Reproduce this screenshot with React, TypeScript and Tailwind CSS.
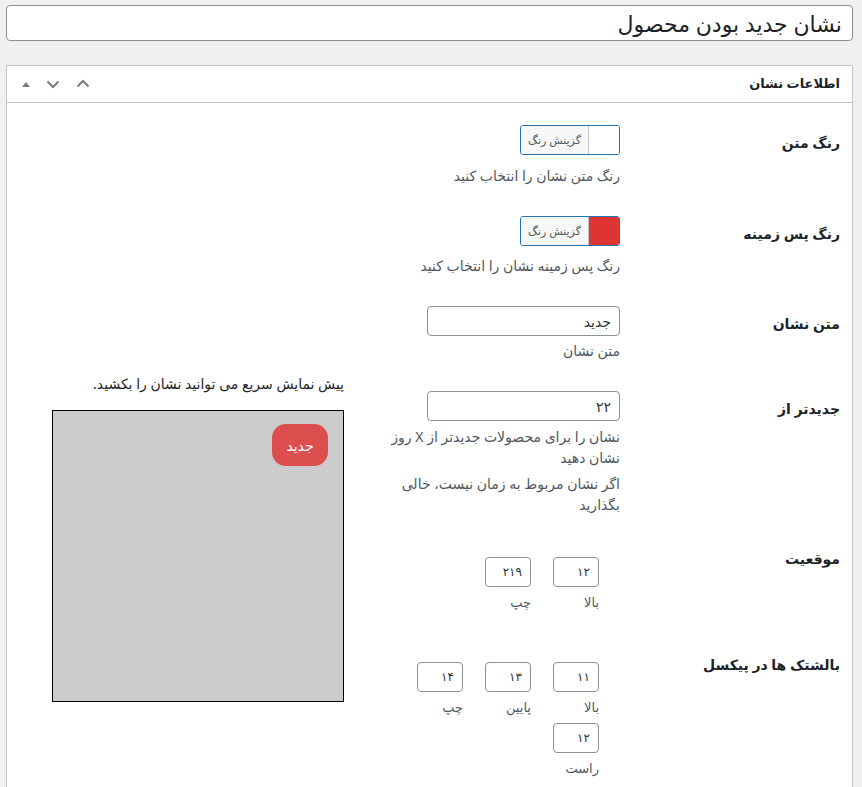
import React from 'react';

const fa = { fontFamily: '"Noto Sans", "DejaVu Sans", sans-serif' };

const ColorPicker: React.FC<{ color?: string }> = ({ color }) => (
  <button className="flex h-[30px] w-[100px] overflow-hidden rounded-[3px] border border-[#2271b1] bg-white">
    <span className="h-full w-[30px] shrink-0" style={{ backgroundColor: color || '#ffffff' }} />
    <span className="flex h-full flex-1 items-center justify-center border-r border-[#c3c4c7] bg-[#f6f7f7] text-[11px] text-[#50575e]">
      گزینش رنگ
    </span>
  </button>
);

const TextBox: React.FC<{ value: string }> = ({ value }) => (
  <div className="flex h-[30px] w-[193px] items-center rounded-[4px] border border-[#8c8f94] bg-white px-2 text-[14px] text-[#2c3338]">
    {value}
  </div>
);

const SmallField: React.FC<{ value: string; label: string }> = ({ value, label }) => (
  <div className="mr-[21px] ml-[1px] w-[46px] pb-[6px]">
    <div className="flex h-[30px] w-[46px] items-center rounded-[4px] border border-[#8c8f94] bg-white px-2 text-[12px] text-[#2c3338]">
      {value}
    </div>
    <div className="mt-[5px] h-5 whitespace-nowrap text-[13px] leading-5 text-[#50575e]">{label}</div>
  </div>
);

const Row: React.FC<{ label: string; labelPt?: string; pt?: string; pb?: string; children: React.ReactNode }> = ({
  label,
  labelPt = 'pt-[23px]',
  pt = 'pt-[15px]',
  pb = 'pb-[15px]',
  children,
}) => (
  <div className="flex">
    <div className={`w-[220px] shrink-0 ${labelPt} text-[14px] font-bold leading-5 text-[#1d2327]`}>{label}</div>
    <div className={`w-[240px] shrink-0 ${pt} ${pb}`}>{children}</div>
  </div>
);

const Desc: React.FC<{ mt: string; children: React.ReactNode }> = ({ mt, children }) => (
  <p className={`${mt} text-[14px] leading-[21px] text-[#50575e]`}>{children}</p>
);

export default function App() {
  return (
    <div dir="rtl" className="min-h-[787px] bg-[#f0f0f1] pt-[5px] pr-[9px] pl-[6px]" style={fa}>
      <div className="flex h-[36px] w-[847px] items-center rounded-[4px] border border-[#8c8f94] bg-white px-[10px] text-[22px] text-[#1d2327]">
        نشان جدید بودن محصول
      </div>

      <div className="mt-[24px] w-[847px] border border-[#c3c4c7] bg-white">
        <div className="flex h-[37px] items-center justify-between border-b border-[#c3c4c7] pr-[12px] pl-[14px]">
          <h2 className="text-[13px] font-bold text-[#1d2327]">اطلاعات نشان</h2>
          <div className="flex items-center gap-[14px] text-[#787c82]" dir="ltr">
            <svg width="10" height="10" viewBox="0 0 10 10"><path d="M1 8 L5 3 L9 8 Z" fill="currentColor" /></svg>
            <svg width="16" height="16" viewBox="0 0 16 16" fill="none" stroke="currentColor" strokeWidth="2"><path d="M2.5 5.5 L8 11 L13.5 5.5" /></svg>
            <svg width="16" height="16" viewBox="0 0 16 16" fill="none" stroke="currentColor" strokeWidth="2"><path d="M2.5 10.5 L8 5 L13.5 10.5" /></svg>
          </div>
        </div>

        <div className="flex pr-[12px] pt-[7px]">
          <div className="w-[460px] shrink-0">
            <Row label="رنگ متن">
              <ColorPicker />
              <Desc mt="mt-[10px]">رنگ متن نشان را انتخاب کنید</Desc>
            </Row>
            <Row label="رنگ پس زمینه">
              <ColorPicker color="#dd3333" />
              <Desc mt="mt-[9px]">رنگ پس زمینه نشان را انتخاب کنید</Desc>
            </Row>
            <Row label="متن نشان">
              <TextBox value="جدید" />
              <Desc mt="mt-[4px]">متن نشان</Desc>
            </Row>
            <Row label="جدیدتر از">
              <TextBox value="۲۲" />
              <Desc mt="mt-[5px]">نشان را برای محصولات جدیدتر از X روز نشان دهید</Desc>
              <Desc mt="mt-[5px]">اگر نشان مربوط به زمان نیست، خالی بگذارید</Desc>
            </Row>
            <Row label="موقعیت" labelPt="pt-[19px]" pt="pt-[27px]" pb="pb-[14px]">
              <div className="flex w-[240px] flex-wrap">
                <SmallField value="۱۲" label="بالا" />
                <SmallField value="۲۱۹" label="چپ" />
              </div>
            </Row>
            <Row label="بالشتک ها در پیکسل" pt="pt-[30px]" pb="pb-[20px]">
              <div className="flex w-[240px] flex-wrap">
                <SmallField value="۱۱" label="بالا" />
                <SmallField value="۱۳" label="پایین" />
                <SmallField value="۱۴" label="چپ" />
                <SmallField value="۱۲" label="راست" />
              </div>
            </Row>
          </div>

          <div className="flex-1 pt-[264px] pr-[36px]">
            <p className="text-[14px] leading-[20px] text-[#1d2327]">پیش نمایش سریع می توانید نشان را بکشید.</p>
            <div className="relative mt-[16px] h-[292px] w-[292px] border border-black bg-[#cccccc]">
              <div className="absolute top-[13px] right-[15px] flex h-[42px] w-[56px] items-center justify-center rounded-[14px] bg-[#dd4f4f] text-[14px] text-white">
                جدید
              </div>
            </div>
          </div>
        </div>
      </div>
    </div>
  );
}
